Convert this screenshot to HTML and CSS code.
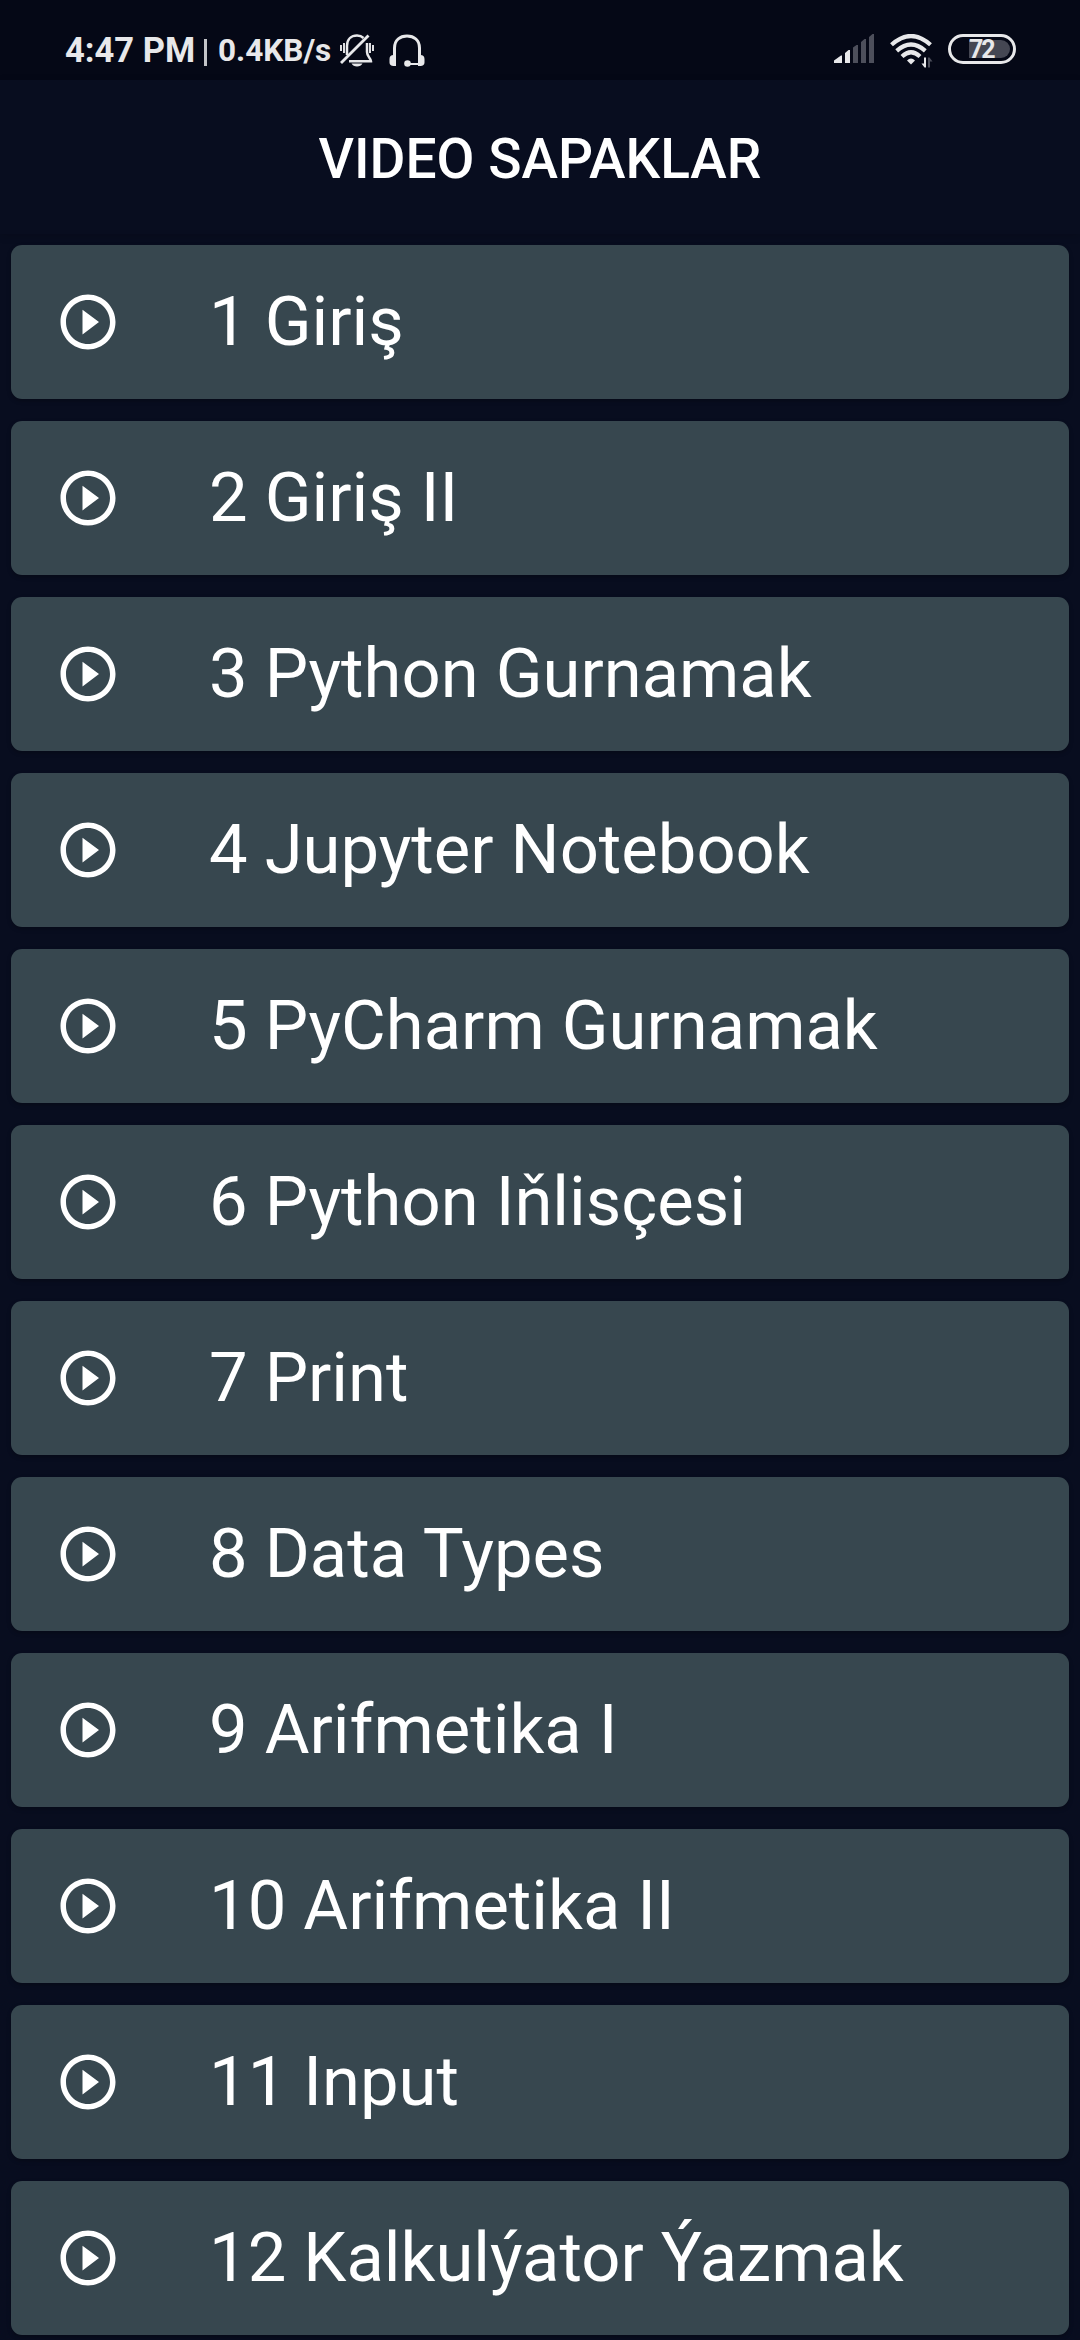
FILE: index.html
```html
<!DOCTYPE html>
<html lang="tk">
<head>
<meta charset="utf-8">
<title>Video Sapaklar</title>
<link rel="stylesheet" href="styles.css">
</head>
<body>
<svg class="defs" width="0" height="0" aria-hidden="true">
  <symbol id="play" viewBox="0 0 24 24"><path d="M10 16.5l6-4.5-6-4.5v9zM12 2C6.48 2 2 6.48 2 12s4.48 10 10 10 10-4.48 10-10S17.52 2 12 2zm0 18c-4.41 0-8-3.59-8-8s3.59-8 8-8 8 3.59 8 8-3.59 8-8 8z"/></symbol>
</svg>
<header class="status">
  <span class="clock">4:47 PM</span>
  <span class="divider"></span>
  <span class="speed">0.4KB/s</span>
  <svg class="bell" width="36" height="34" viewBox="0 0 36 34" fill="none" stroke="currentColor" stroke-width="2.500">
    <path d="M8 21V12C8 5 12.500 1.500 18 1.500c3 0 5 1 6.500 2.500M28 9v9c0 5 4 6 4 9.300H10"/>
    <path d="M2 29L29.500 1.500" stroke-width="2.800"/>
    <path d="M2 11v6M5 9v10M31 9v10M34 11v6" stroke-width="1.900"/>
    <path d="M12.500 29.500h11c-1 2-3 3-5.500 3s-4.500-1-5.500-3z" fill="currentColor" stroke="none"/>
  </svg>
  <svg class="headset" width="36" height="34" viewBox="0 0 36 34" fill="none" stroke="currentColor">
    <path d="M5.500 22V14C5.500 6 11 2 18 2s12.500 4 12.500 12v8" stroke-width="3"/>
    <path d="M7 21v11H4.500C2 32 .5 30.500.5 28.500V25C.5 22.500 2 21 4.500 21zM29 21v11h2.500c2.500 0 4-1.500 4-3.500V25c0-2.500-1.500-4-4-4z" fill="currentColor" stroke="none"/>
    <path d="M18.500 30H30" stroke-width="2"/><circle cx="18.500" cy="29.500" r="3.300" fill="currentColor" stroke="none"/>
  </svg>
  <svg class="signal" width="40" height="30" viewBox="0 0 40 30" fill="currentColor">
    <path d="M0 29v-2.500L7 21.500h1V29zM11 29V19L14.500 16H16v13z"/>
    <path class="dim" d="M19 29V13.500L22.500 11H24v18zM27 29V8l3.500-3H32v24zM35 29V3l3.500-3H40v29z"/>
  </svg>
  <svg class="wifi" width="43" height="34" viewBox="0 0 43 34" fill="none" stroke="currentColor" stroke-width="4.200">
    <path d="M1.500 10.800Q21 -6.800 40.500 10.800M6.700 16.800Q21 4.200 35.300 16.800M12 22.500Q21 14 30 22.500"/>
    <path d="M17 26.500q4-3.800 8 0L21 30.500z" fill="currentColor" stroke="none"/>
    <path d="M36 23.500v10h-1.500l-3-4H34v-6z" fill="currentColor" stroke="none"/>
    <path class="dim" d="M38 23.500h1.500l3 4h-2.500v6h-2z" stroke="none"/>
  </svg>
  <div class="battery"><span class="level">72</span></div>
</header>
<h1 class="title">VIDEO SAPAKLAR</h1>
<main class="list">
  <div class="card"><svg class="play"><use href="#play"/></svg><span>1 Giriş</span></div>
  <div class="card"><svg class="play"><use href="#play"/></svg><span>2 Giriş II</span></div>
  <div class="card"><svg class="play"><use href="#play"/></svg><span>3 Python Gurnamak</span></div>
  <div class="card"><svg class="play"><use href="#play"/></svg><span>4 Jupyter Notebook</span></div>
  <div class="card"><svg class="play"><use href="#play"/></svg><span>5 PyCharm Gurnamak</span></div>
  <div class="card"><svg class="play"><use href="#play"/></svg><span>6 Python Iňlisçesi</span></div>
  <div class="card"><svg class="play"><use href="#play"/></svg><span>7 Print</span></div>
  <div class="card"><svg class="play"><use href="#play"/></svg><span>8 Data Types</span></div>
  <div class="card"><svg class="play"><use href="#play"/></svg><span>9 Arifmetika I</span></div>
  <div class="card"><svg class="play"><use href="#play"/></svg><span>10 Arifmetika II</span></div>
  <div class="card"><svg class="play"><use href="#play"/></svg><span>11 Input</span></div>
  <div class="card"><svg class="play"><use href="#play"/></svg><span>12 Kalkulýator Ýazmak</span></div>
</main>
</body>
</html>
```

FILE: styles.css
```css
* { box-sizing: border-box; }
html { height: 100%; overflow: hidden; }
body {
  margin: 0;
  height: 2340px;
  overflow: hidden;
  background: #080d1f;
  color: #fff;
  font-family: Roboto, sans-serif;
}
.defs { display: block; }
.status {
  display: flex;
  align-items: flex-start;
  height: 80px;
  padding: 34px 64px 0 65px;
  background: #050816;
  color: #e8e8ea;
  font-weight: 700;
  white-space: nowrap;
}
.status svg { flex: none; }
.clock { width: 139px; font-size: 34.500px; line-height: 32px; }
.divider { width: 3px; height: 27px; margin-top: 5px; background: #c3c4c8; }
.speed { width: 131px; padding-left: 11px; font-size: 31.500px; line-height: 34px; }
.bell { margin-left: 1px; }
.headset { margin-left: 14px; }
.signal { margin-left: auto; }
.wifi { margin-left: 16px; }
.dim { fill: #4d4f5b; }
.battery {
  width: 68px;
  height: 30px;
  margin-left: 15px;
  padding: 3px;
  border: 3px solid #e8e8ea;
  border-radius: 15px;
}
.level {
  display: block;
  width: 41px;
  height: 18px;
  margin-left: 15px;
  border-radius: 0 9px 9px 0;
  background: #454753;
  font-size: 25px;
  letter-spacing: -2px;
  line-height: 19px;
}
.title {
  height: 154px;
  margin: 0;
  padding-top: 1px;
  box-shadow: 0 2px 8px rgba(0, 0, 0, .15);
  font-size: 55px;
  font-weight: 500;
  line-height: 156px;
  text-align: center;
}
.list {
  display: flex;
  flex-direction: column;
  gap: 22px;
  padding: 11px;
}
.card {
  display: flex;
  align-items: center;
  flex: none;
  height: 154px;
  padding-left: 44px;
  border-radius: 11px;
  background: #37474f;
  box-shadow: 0 2px 4px rgba(0, 0, 0, .25);
  font-size: 68.750px;
  line-height: 80px;
  white-space: nowrap;
}
.play { width: 66px; height: 66px; margin-right: 88px; fill: #fff; }
```
